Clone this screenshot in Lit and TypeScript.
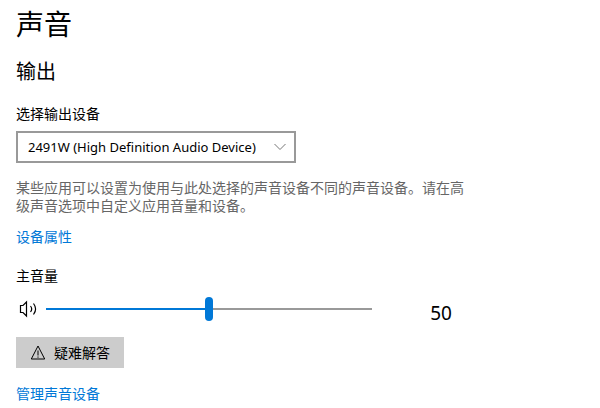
import { LitElement, html, css } from "lit";
import { customElement, state } from "lit/decorators.js";
import { styleMap } from "lit/directives/style-map.js";

@customElement("app-root")
export class AppRoot extends LitElement {
  @state() private volume = 50;

  static styles = css`
    :host {
      display: block;
      box-sizing: border-box;
      max-width: 480px;
      padding: 7px 16px 0;
      background: #fff;
      color: #000;
      font-family: "Noto Sans CJK SC", sans-serif;
      font-size: 14px;
      font-weight: 400;
      line-height: 18px;
    }
    .title,
    .heading {
      margin: 0;
      font-weight: 400;
    }
    .title {
      font-size: 28px;
      line-height: 32px;
    }
    .heading {
      margin-top: 20px;
      font-size: 20px;
      line-height: 24px;
    }
    .label {
      display: block;
      margin-top: 21px;
    }
    .picker {
      position: relative;
      width: 280px;
      max-width: 100%;
      margin-top: 9px;
    }
    .select {
      display: block;
      box-sizing: border-box;
      width: 100%;
      height: 32px;
      margin: 0;
      padding: 0 24px 0 10px;
      border: 2px solid #999;
      border-radius: 0;
      background: #fff;
      color: #000;
      font-family: "Noto Sans", sans-serif;
      font-size: 13px;
      appearance: none;
    }
    .chevron {
      position: absolute;
      right: 9px;
      top: 12px;
      width: 14px;
      height: 8px;
      pointer-events: none;
    }
    .note {
      margin: 15px 0 13px;
      color: #666;
    }
    .link {
      display: table;
      color: #0078d7;
      text-decoration: none;
    }
    .mixer {
      display: flex;
      align-items: flex-start;
      margin-top: 13px;
    }
    .speaker {
      flex: none;
      width: 24px;
      height: 24px;
      margin-right: 6px;
    }
    .slider {
      flex: 1;
      min-width: 0;
      height: 24px;
      margin: 0;
      appearance: none;
      background: transparent;
    }
    .slider::-webkit-slider-runnable-track {
      height: 2px;
      background: linear-gradient(
        to right,
        #0078d7 var(--level),
        #999 var(--level)
      );
    }
    .slider::-webkit-slider-thumb {
      appearance: none;
      width: 8px;
      height: 24px;
      margin-top: -11px;
      border-radius: 4px;
      background: #0078d7;
    }
    .value {
      width: 46px;
      margin-left: 46px;
      font-family: "Noto Sans", sans-serif;
      font-size: 19px;
      line-height: 32px;
      text-align: center;
    }
    .trouble {
      display: flex;
      align-items: center;
      gap: 8px;
      height: 31px;
      margin: 8px 0 16px;
      padding: 0 14px 1px;
      border: 0;
      background: #ccc;
      color: #000;
      font: inherit;
    }
    .warning {
      width: 16px;
      height: 16px;
    }
  `;

  private onInput(e: Event) {
    this.volume = Number((e.target as HTMLInputElement).value);
  }

  render() {
    return html`
      <main>
        <h1 class="title">声音</h1>
        <h2 class="heading">输出</h2>
        <label class="label" for="device">选择输出设备</label>
        <div class="picker">
          <select class="select" id="device">
            <option>2491W (High Definition Audio Device)</option>
          </select>
          <svg class="chevron" viewBox="0 0 14 8" fill="none" stroke="#777" aria-hidden="true">
            <path d="M1.5 1 7 6.5 12.5 1" />
          </svg>
        </div>
        <p class="note">
          某些应用可以设置为使用与此处选择的声音设备不同的声音设备。请在高级声音选项中自定义应用音量和设备。
        </p>
        <a class="link" href="#properties">设备属性</a>
        <label class="label" for="volume">主音量</label>
        <div class="mixer">
          <svg class="speaker" viewBox="0 0 24 24" fill="none" stroke="#000" stroke-width="1.2" aria-hidden="true">
            <path d="M4.5 8.5H7L10.5 5v14L7 15.5H4.5z" />
            <path d="M14.5 9q2.4 3 0 6M17.5 6.5q4.2 5.5 0 11" />
          </svg>
          <input
            class="slider"
            id="volume"
            type="range"
            min="0"
            max="100"
            .value=${String(this.volume)}
            style=${styleMap({ "--level": `${this.volume}%` })}
            @input=${this.onInput}
          />
          <output class="value" for="volume">${this.volume}</output>
        </div>
        <button class="trouble" type="button">
          <svg class="warning" viewBox="0 0 16 16" fill="none" stroke="#000" aria-hidden="true">
            <path d="M8 2 14.7 15H1.3z" />
            <path d="M8 6.5v5M8 12.5v1.2" />
          </svg>
          疑难解答
        </button>
        <a class="link" href="#manage">管理声音设备</a>
      </main>
    `;
  }
}
